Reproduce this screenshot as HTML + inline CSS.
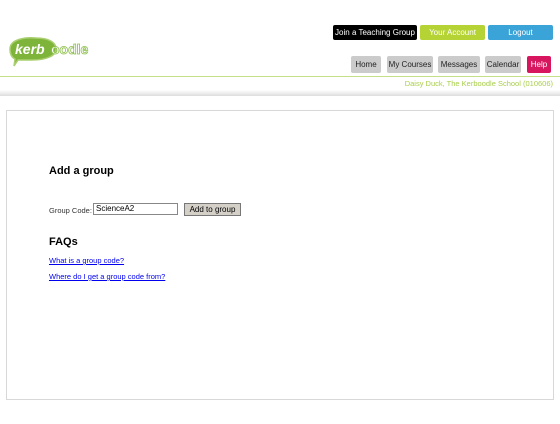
<!DOCTYPE html><html><head><style>
body{margin:0;width:560px;height:424px;background:#fff;font-family:"Liberation Sans",Verdana,sans-serif;position:relative;overflow:hidden}
.a{position:absolute}
.tb{position:absolute;top:25px;height:15px;font-size:8px;color:#fff;text-align:center;line-height:15px;border-radius:2px}
.nb{position:absolute;top:56px;height:17px;font-size:8px;color:#222;background:#cbcbcb;text-align:center;line-height:17px;border-radius:2px}
a{color:#00e;font-size:7.5px}
</style></head><body>
<div class="tb" style="left:333px;width:84px;background:#000">Join a Teaching Group</div>
<div class="tb" style="left:420px;width:65px;background:#b5d334">Your Account</div>
<div class="tb" style="left:488px;width:65px;background:#3aa3d8">Logout</div>
<div class="nb" style="left:351px;width:30px">Home</div>
<div class="nb" style="left:387px;width:46px">My Courses</div>
<div class="nb" style="left:438px;width:42px">Messages</div>
<div class="nb" style="left:485px;width:36px">Calendar</div>
<div class="nb" style="left:527px;width:24px;background:#d8165f;color:#fff">Help</div>
<svg class="a" style="left:6px;top:35px" width="90" height="32"><path d="M4 14 C4 4 20 2 30 3 C44 3 50 8 50 14 C50 21 40 25 26 25 L12 25 L8 31 L9 24 C5 22 4 18 4 14Z" fill="#7fb43b" stroke="#a9cf6f" stroke-width="1.5"/><text x="9" y="19" font-family="Liberation Sans" font-weight="bold" font-style="italic" font-size="14" fill="#fff">kerb</text><text x="45" y="19" font-family="Liberation Sans" font-weight="bold" font-size="14" fill="#fff" stroke="#8cbf4a" stroke-width="0.8">oodle</text></svg>
<div class="a" style="left:0;top:76px;width:560px;height:1px;background:#c8df8a"></div>
<div class="a" style="right:7px;top:79px;font-size:7.5px;color:#a9cf4a">Daisy Duck, The Kerboodle School (010606)</div>
<div class="a" style="left:0;top:90px;width:560px;height:6px;background:linear-gradient(#fff,#ddd)"></div>
<div class="a" style="left:6px;top:110px;width:546px;height:288px;border:1px solid #d8d8d8"></div>
<div class="a" style="left:49px;top:165px;font-size:11px;font-weight:bold">Add a group</div>
<div class="a" style="left:49px;top:206px;font-size:7.5px;color:#333">Group Code:</div>
<div class="a" style="left:93px;top:203px;width:81px;height:10px;border:1px solid #888;font-size:8px;line-height:10px;padding-left:2px">ScienceA2</div>
<div class="a" style="left:184px;top:203px;width:55px;height:11px;background:#d4d0c8;border:1px solid #777;font-size:8px;text-align:center;line-height:11px">Add to group</div>
<div class="a" style="left:49px;top:236px;font-size:11px;font-weight:bold">FAQs</div>
<div class="a" style="left:49px;top:254px;line-height:10px"><a href="#">What is a group code?</a></div>
<div class="a" style="left:49px;top:270px;line-height:10px"><a href="#">Where do I get a group code from?</a></div>
</body></html>
